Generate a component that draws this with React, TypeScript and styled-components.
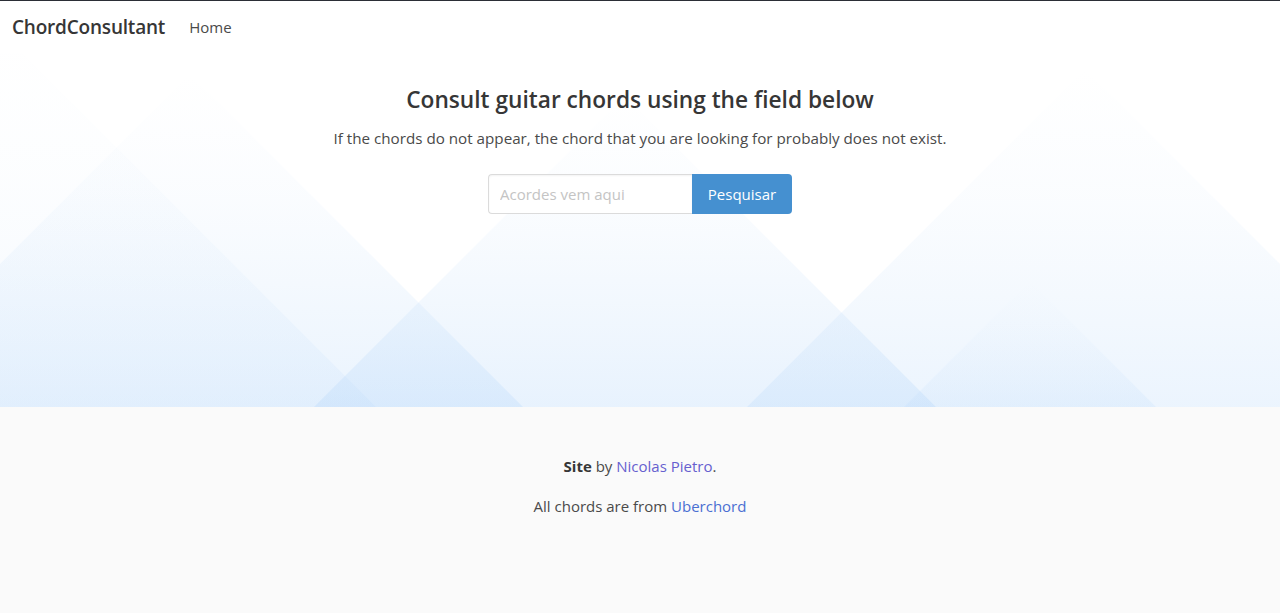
import styled, { createGlobalStyle } from "styled-components";

const GlobalStyle = createGlobalStyle`
  html, body {
    margin: 0;
    padding: 0;
    background: #fafafa;
  }
  body {
    border-top: 1px solid #2b2e36;
    font-family: "Open Sans", "Noto Sans", sans-serif;
    color: #4a4a4a;
  }
  * {
    box-sizing: border-box;
  }
`;

type Tri = { apexX: number; apexY: number; strength: number };

const triangles: Tri[] = [
  { apexX: 0, apexY: -22, strength: 0.12 },
  { apexX: 190, apexY: 21, strength: 0.22 },
  { apexX: 625, apexY: 43, strength: 0.24 },
  { apexX: 1085, apexY: 16, strength: 0.2 },
  { apexX: 1030, apexY: 228, strength: 0.14 },
];

function HeroBackdrop() {
  const h = 354;
  return (
    <Backdrop viewBox={`0 0 1280 ${h}`} preserveAspectRatio="none">
      <defs>
        {triangles.map((t, i) => (
          <linearGradient key={i} id={`tri${i}`} x1="0" y1="0" x2="0" y2="1">
            <stop offset="0" stopColor="#cfe4fb" stopOpacity={0} />
            <stop offset="0.35" stopColor="#c4def9" stopOpacity={t.strength * 0.35} />
            <stop offset="1" stopColor="#b4d6fa" stopOpacity={t.strength * 1.3} />
          </linearGradient>
        ))}
      </defs>
      {triangles.map((t, i) => {
        const d = h - t.apexY;
        return (
          <polygon
            key={i}
            points={`${t.apexX},${t.apexY} ${t.apexX + d},${h} ${t.apexX - d},${h}`}
            fill={`url(#tri${i})`}
          />
        );
      })}
    </Backdrop>
  );
}

export default function App() {
  return (
    <Page>
      <GlobalStyle />
      <Navbar>
        <Brand>ChordConsultant</Brand>
        <NavLink href="#">Home</NavLink>
      </Navbar>
      <Hero>
        <HeroBackdrop />
        <HeroBody>
          <Title>Consult guitar chords using the field below</Title>
          <Subtitle>
            If the chords do not appear, the chord that you are looking for probably does not exist.
          </Subtitle>
          <SearchForm onSubmit={(e) => e.preventDefault()}>
            <SearchInput type="text" placeholder="Acordes vem aqui" />
            <SearchButton type="submit">Pesquisar</SearchButton>
          </SearchForm>
        </HeroBody>
      </Hero>
      <Footer>
        <FooterLine>
          <strong>Site</strong> by <FooterLink href="#" $visited>Nicolas Pietro</FooterLink>.
        </FooterLine>
        <FooterLine>
          All chords are from <FooterLink href="#">Uberchord</FooterLink>
        </FooterLine>
      </Footer>
    </Page>
  );
}

const Page = styled.div`
  min-height: 612px;
  display: flex;
  flex-direction: column;
  background: #fafafa;
`;

const Navbar = styled.nav`
  height: 52px;
  display: flex;
  align-items: center;
  gap: 24px;
  padding: 0 12px;
  background: #fff;
`;

const Brand = styled.a`
  font-size: 19px;
  font-weight: 600;
  color: #363636;
  letter-spacing: -0.2px;
`;

const NavLink = styled.a`
  font-size: 15px;
  color: #4a4a4a;
  text-decoration: none;
`;

const Hero = styled.section`
  position: relative;
  height: 354px;
  background: #fff;
  overflow: hidden;
`;

const Backdrop = styled.svg`
  position: absolute;
  inset: 0;
  width: 100%;
  height: 100%;
  display: block;
`;

const HeroBody = styled.div`
  position: relative;
  display: flex;
  flex-direction: column;
  align-items: center;
  padding-top: 32px;
`;

const Title = styled.h1`
  margin: 0;
  font-size: 22.7px;
  font-weight: 600;
  color: #363636;
  line-height: 30px;
`;

const Subtitle = styled.p`
  margin: 12px 0 0;
  font-size: 15.2px;
  line-height: 22px;
  color: #4a4a4a;
`;

const SearchForm = styled.form`
  display: flex;
  margin-top: 25px;
`;

const SearchInput = styled.input`
  width: 204px;
  height: 40px;
  padding: 0 11px;
  border: 1px solid #dbdbdb;
  border-right: none;
  border-radius: 4px 0 0 4px;
  font-family: inherit;
  font-size: 15px;
  color: #363636;
  background: #fff;
  box-shadow: inset 0 1px 2px rgba(10, 10, 10, 0.05);
  outline: none;

  &::placeholder {
    color: #c4c4c4;
  }
`;

const SearchButton = styled.button`
  width: 100px;
  height: 40px;
  border: none;
  border-radius: 0 4px 4px 0;
  background: #4590d0;
  color: #fff;
  font-family: inherit;
  font-size: 15px;
  cursor: pointer;
`;

const Footer = styled.footer`
  flex: 1;
  background: #fafafa;
  padding: 47px 24px;
  display: flex;
  flex-direction: column;
  align-items: center;
  gap: 16px;
`;

const FooterLine = styled.p`
  margin: 0;
  font-size: 15px;
  line-height: 24px;
  color: #4a4a4a;

  strong {
    color: #363636;
    font-weight: 700;
  }
`;

const FooterLink = styled.a<{ $visited?: boolean }>`
  color: ${(p) => (p.$visited ? "#6660cf" : "#4a6fd2")};
  text-decoration: none;
`;
